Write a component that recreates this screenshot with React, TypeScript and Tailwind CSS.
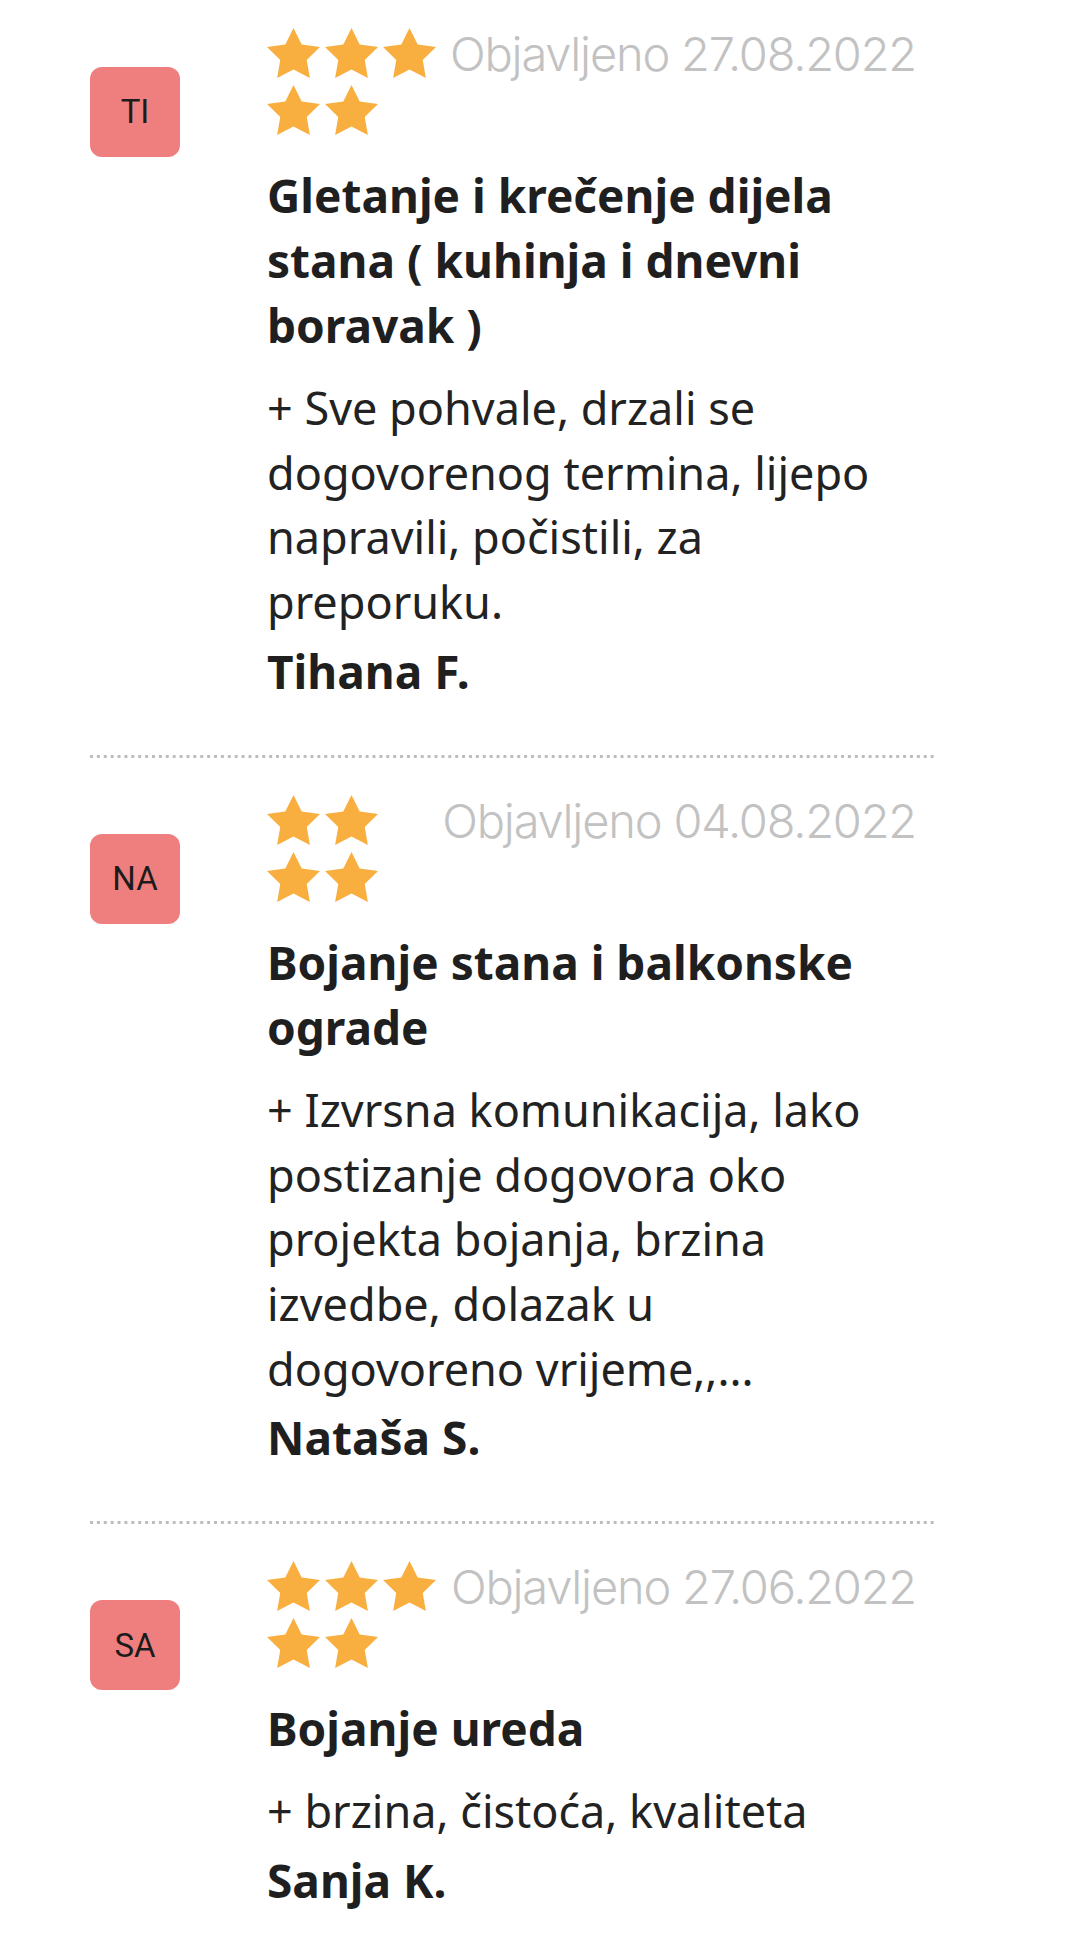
const reviews = [
  {
    initials: 'TI',
    stars: 5,
    date: '27.08.2022',
    title: 'Gletanje i krečenje dijela stana ( kuhinja i dnevni boravak )',
    text: '+ Sve pohvale, drzali se dogovorenog termina, lijepo napravili, počistili, za preporuku.',
    author: 'Tihana F.',
  },
  {
    initials: 'NA',
    stars: 4,
    date: '04.08.2022',
    title: 'Bojanje stana i balkonske ograde',
    text: '+ Izvrsna komunikacija, lako postizanje dogovora oko projekta bojanja, brzina izvedbe, dolazak u dogovoreno vrijeme,,...',
    author: 'Nataša S.',
  },
  {
    initials: 'SA',
    stars: 5,
    date: '27.06.2022',
    title: 'Bojanje ureda',
    text: '+ brzina, čistoća, kvaliteta',
    author: 'Sanja K.',
  },
]

function Star() {
  return (
    <svg viewBox="2 2 20 19.02" width="53" height="50" preserveAspectRatio="none">
      <polygon
        fill="#F9AF3F"
        points="12,2 15.09,8.26 22,9.27 17,14.14 18.18,21.02 12,17.77 5.82,21.02 7,14.14 2,9.27 8.91,8.26"
      />
    </svg>
  )
}

export default function App() {
  return (
    <div className="min-h-screen w-[1080px] bg-white pl-[90px] pt-[25px] font-['Noto_Sans',sans-serif]">
      <div className="w-[847px]">
        {reviews.map((r, i) => (
          <div key={r.author}>
            {i > 0 && (
              <div className="mb-[34px] mt-[51px] h-[3px] bg-[linear-gradient(to_right,#bdbdbd_3px,transparent_3px)] bg-[length:6.9px_3px]" />
            )}
            <div className="flex">
              <div className="mt-[42px] flex h-[90px] w-[90px] shrink-0 items-center justify-center rounded-[12px] bg-[#EF7F7E] font-['Roboto',sans-serif] text-[33px] text-[#1c1c1c]">
                {r.initials}
              </div>
              <div className="ml-[87px] w-[649px]">
                <div className="flex items-start justify-between">
                  <div className={`flex shrink-0 flex-wrap ${r.stars === 4 ? 'w-[116px]' : 'w-[174px]'}`}>
                    {Array.from({ length: r.stars }).map((_, k) => (
                      <div key={k} className="h-[57px] w-[58px] pt-[3px]">
                        <Star />
                      </div>
                    ))}
                  </div>
                  <div className="whitespace-nowrap font-['Inter',sans-serif] text-[47px] font-light leading-[57px] tracking-[-1.2px] text-[#c2c2c2]">
                    Objavljeno {r.date}
                  </div>
                </div>
                <h3 className="mt-6 text-[46px] font-bold leading-[65px] text-[#1f1f1f]">
                  {r.title}
                </h3>
                <p className="mt-[18px] text-[45px] leading-[64.7px] text-[#222]">
                  {r.text}
                </p>
                <div className="mt-1 text-[46px] font-bold leading-[65px] text-[#1f1f1f]">
                  {r.author}
                </div>
              </div>
            </div>
          </div>
        ))}
      </div>
    </div>
  )
}
